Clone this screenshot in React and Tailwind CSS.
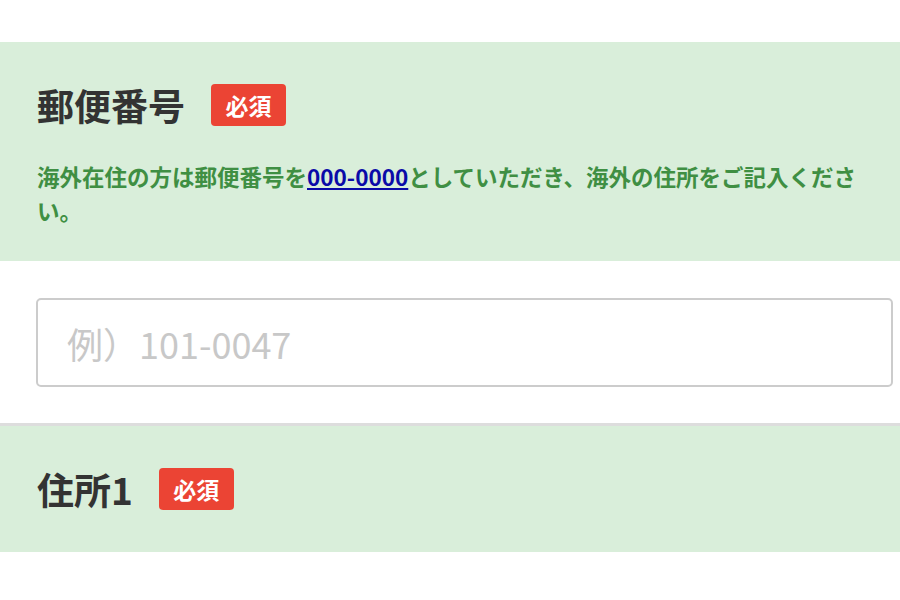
import React from "react";

const jp = { fontFamily: '"Noto Sans CJK JP", "Noto Sans", sans-serif' };

function Required() {
  return (
    <span className="inline-flex h-[42px] w-[75px] items-center justify-center rounded-[4px] bg-[#eb4434] text-[23px] font-bold leading-none text-white">
      必須
    </span>
  );
}

export default function App() {
  return (
    <div className="min-h-[600px] w-[900px] bg-white pt-[42px]" style={jp}>
      {/* 郵便番号 */}
      <section className="bg-[#d9eeda] px-[37px] pb-[34px] pt-[38px]">
        <div className="flex h-[50px] items-center gap-[26px]">
          <h2 className="text-[37px] font-bold leading-[50px] text-[#333333]">郵便番号</h2>
          <Required />
        </div>
        <p className="mt-[29px] text-[22.5px] font-bold leading-[34px] text-[#3f8f43]">
          海外在住の方は郵便番号を
          <a href="#" className="text-[#0a0aa8] underline underline-offset-2">000-0000</a>
          としていただき、海外の住所をご記入ください。
        </p>
      </section>

      {/* input */}
      <div className="pb-[36px] pl-[36px] pr-[7px] pt-[37px]">
        <input
          type="text"
          placeholder="例）101-0047"
          className="h-[89px] w-full rounded-[5px] border-2 border-[#cccccc] bg-white px-[29px] text-[36px] text-[#333333] outline-none placeholder:text-[#c8c8c8]"
        />
      </div>

      {/* 住所1 */}
      <section className="border-t-[3px] border-[#dddddd] bg-[#d9eeda] px-[37px] pb-[38px] pt-[38px]">
        <div className="flex h-[50px] items-center gap-[26px]">
          <h2 className="text-[37px] font-bold leading-[50px] text-[#333333]">住所1</h2>
          <Required />
        </div>
      </section>
    </div>
  );
}
